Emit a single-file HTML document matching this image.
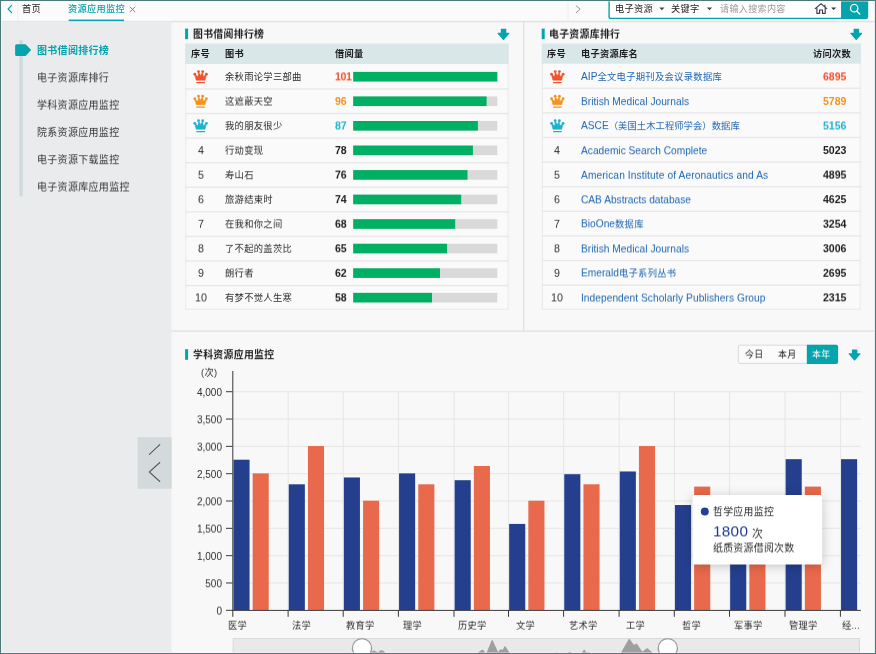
<!DOCTYPE html>
<html lang="zh-CN">
<head>
<meta charset="utf-8">
<title>资源应用监控</title>
<style>
html,body{margin:0;padding:0;width:876px;height:654px;overflow:hidden;background:#f8f8f8}
body{position:relative;font-family:"Liberation Sans","Noto Sans CJK SC",sans-serif}
.L{position:absolute;left:0;top:0;display:block}
.t{position:absolute;white-space:nowrap;line-height:16px;transform-origin:0 0;will-change:transform}
</style>
</head>
<body>
<svg class="L" width="876" height="654" viewBox="0 0 876 654"><defs><filter id="s1" x="-5%" y="-50%" width="110%" height="250%"><feGaussianBlur stdDeviation="0.7"/></filter><filter id="s2" x="-30%" y="-50%" width="160%" height="200%"><feGaussianBlur stdDeviation="5.5"/></filter></defs>
<rect x="0" y="0" width="876" height="654" fill="#f8f8f8"/>
<rect x="0" y="21" width="171.4" height="633" fill="#e9ebed"/>
<rect x="171.3" y="21.5" width="0.9" height="632" fill="#f3f3f3"/>
<linearGradient id="g3" x1="0" x2="0" y1="0" y2="1"><stop offset="0" stop-color="#000" stop-opacity="0.15"/><stop offset="0.3" stop-color="#000" stop-opacity="0.09"/><stop offset="0.6" stop-color="#000" stop-opacity="0.03"/><stop offset="1" stop-color="#000" stop-opacity="0"/></linearGradient>
<rect x="171.4" y="20.5" width="704" height="3" fill="url(#g3)"/>
<rect x="0" y="20.5" width="171.4" height="0.9" fill="rgba(0,0,0,0.05)"/>
<rect x="0" y="0" width="876" height="20.7" fill="#fbfbfb"/>
<path d="M5.6 2.4 L2.1 6.0 L5.6 9.6" fill="none" stroke="#05a4ad" stroke-width="1.2" transform="translate(6 3)" stroke-linecap="round" stroke-linejoin="round"/>
<linearGradient id="g1" x1="0" x2="1" y1="0" y2="0"><stop offset="0" stop-color="#000" stop-opacity="0.045"/><stop offset="1" stop-color="#000" stop-opacity="0"/></linearGradient>
<linearGradient id="g2" x1="0" x2="1" y1="0" y2="0"><stop offset="0" stop-color="#000" stop-opacity="0"/><stop offset="1" stop-color="#000" stop-opacity="0.04"/></linearGradient>
<rect x="17.2" y="1" width="2.4" height="20" fill="url(#g1)"/>
<rect x="565.5" y="1" width="3.2" height="20" fill="url(#g2)"/>
<rect x="68.7" y="19.55" width="55.3" height="1.55" fill="#05a4ad"/>
<path d="M2.1 2 L7.5 7.4 M7.5 2 L2.1 7.4" fill="none" stroke="#777" stroke-width="0.9" transform="translate(127.7 4.7)"/>
<path d="M3.2 2.7 L7.2 6.2 L3.2 9.7" fill="none" stroke="#8a8a8a" stroke-width="0.9" transform="translate(573 3)" stroke-linecap="round" stroke-linejoin="round"/>
<path d="M609.1 0 V16.9 Q609.1 18.4 610.6 18.4 H842 V0" fill="#fff" stroke="#05a4ad" stroke-width="1.4"/>
<path d="M841.2 0 H868.2 V17.1 Q868.2 19.1 866.2 19.1 H841.2 Z" fill="#05a4ad"/>
<path d="M0 0 H5.2 L2.6 2.8 Z" fill="#444" transform="translate(659.3 7.5)"/>
<path d="M0 0 H5.2 L2.6 2.8 Z" fill="#444" transform="translate(706.9 7.5)"/>
<path d="M0.9 5.9 L7.05 0.7 L13.2 5.9 M2.9 4.8 V10.4 H5.6 V7.0 H8.5 V10.4 H11.2 V4.8 M10.9 1.7 V3.6" fill="none" stroke="#3f3f52" stroke-width="1.15" transform="translate(814 3)"/>
<path d="M0 0 H5 L2.5 2.6 Z" fill="#333" transform="translate(831.1 7.5)"/>
<circle cx="854.2" cy="8.2" r="3.7" fill="none" stroke="#fff" stroke-width="1.25"/>
<path d="M856.9 11.2 L859.8 14.1" stroke="#fff" stroke-width="1.35" stroke-linecap="round"/>
<rect x="19.4" y="40.2" width="3.4" height="156.2" fill="#cfdadc"/>
<path d="M2.6 1.1 H11.6 L17.2 7 L11.6 12.9 H2.6 Q1.1 12.9 1.1 11.4 V2.6 Q1.1 1.1 2.6 1.1 Z" fill="#05a4ad" transform="translate(14 43.1)"/>
<rect x="137.6" y="437.2" width="34" height="51.6" fill="#d4dadb"/>
<path d="M5.4 14.4 L15.8 4.6 M15.8 22.5 L5.3 32 L15.8 41.5" fill="none" stroke="#585858" stroke-width="1.1" transform="translate(144 440)" stroke-linecap="round"/>
<rect x="171.3" y="330.3" width="702.7" height="1.7" fill="#e5e5e5"/>
<rect x="523" y="22" width="1.2" height="308.5" fill="#dfdfdf"/>
<rect x="185.1" y="28.6" width="3" height="10.6" fill="#05a4ad"/>
<path d="M4.7 0.8 H9.6 Q9.9 0.8 9.9 1.1 V4.7 H12.3 Q13.6 4.7 12.8 5.7 L7.55 11.7 Q7.05 12.25 6.55 11.7 L1.3 5.7 Q0.5 4.7 1.8 4.7 H4.4 V1.1 Q4.4 0.8 4.7 0.8 Z" fill="#05a4ad" transform="translate(496.4 28)"/>
<rect x="185.8" y="43.85" width="322.3" height="265.45" fill="#fafafa" stroke="#ebebeb" stroke-width="1.2"/>
<rect x="185.2" y="43.85" width="323.5" height="20.15" fill="#d9e7e8"/>
<rect x="185.2" y="88.3" width="323.5" height="1.4" fill="#e8e8e8"/>
<rect x="185.2" y="112.87" width="323.5" height="1.4" fill="#e8e8e8"/>
<rect x="185.2" y="137.44" width="323.5" height="1.4" fill="#e8e8e8"/>
<rect x="185.2" y="162.01" width="323.5" height="1.4" fill="#e8e8e8"/>
<rect x="185.2" y="186.58" width="323.5" height="1.4" fill="#e8e8e8"/>
<rect x="185.2" y="211.15" width="323.5" height="1.4" fill="#e8e8e8"/>
<rect x="185.2" y="235.72" width="323.5" height="1.4" fill="#e8e8e8"/>
<rect x="185.2" y="260.29" width="323.5" height="1.4" fill="#e8e8e8"/>
<rect x="185.2" y="284.86" width="323.5" height="1.4" fill="#e8e8e8"/>
<g transform="translate(192.6 69)" fill="#f4512f"><path d="M3.6 11.2 L2.1 5.4 L5.4 7.6 L5.9 2.9 L8 6.4 L10.1 2.9 L10.6 7.6 L13.9 5.4 L12.4 11.2 Z" stroke="#f4512f" stroke-width="0.5" stroke-linejoin="round"/><circle cx="2.2" cy="5.2" r="1.4"/><circle cx="5.9" cy="2.6" r="1.4"/><circle cx="10.1" cy="2.6" r="1.4"/><circle cx="13.8" cy="5.2" r="1.4"/><rect x="3.7" y="12.9" width="8.7" height="1.25" rx="0.3"/></g>
<rect x="353.2" y="71.9" width="144.1" height="9.6" fill="#d9d9d9"/>
<rect x="353.2" y="71.9" width="144.1" height="9.6" fill="#00b062"/>
<g transform="translate(192.6 93.55)" fill="#f6921e"><path d="M3.6 11.2 L2.1 5.4 L5.4 7.6 L5.9 2.9 L8 6.4 L10.1 2.9 L10.6 7.6 L13.9 5.4 L12.4 11.2 Z" stroke="#f6921e" stroke-width="0.5" stroke-linejoin="round"/><circle cx="2.2" cy="5.2" r="1.4"/><circle cx="5.9" cy="2.6" r="1.4"/><circle cx="10.1" cy="2.6" r="1.4"/><circle cx="13.8" cy="5.2" r="1.4"/><rect x="3.7" y="12.9" width="8.7" height="1.25" rx="0.3"/></g>
<rect x="353.2" y="96.45" width="144.1" height="9.6" fill="#d9d9d9"/>
<rect x="353.2" y="96.45" width="133.4" height="9.6" fill="#00b062"/>
<g transform="translate(192.6 118.1)" fill="#1bb4d0"><path d="M3.6 11.2 L2.1 5.4 L5.4 7.6 L5.9 2.9 L8 6.4 L10.1 2.9 L10.6 7.6 L13.9 5.4 L12.4 11.2 Z" stroke="#1bb4d0" stroke-width="0.5" stroke-linejoin="round"/><circle cx="2.2" cy="5.2" r="1.4"/><circle cx="5.9" cy="2.6" r="1.4"/><circle cx="10.1" cy="2.6" r="1.4"/><circle cx="13.8" cy="5.2" r="1.4"/><rect x="3.7" y="12.9" width="8.7" height="1.25" rx="0.3"/></g>
<rect x="353.2" y="121" width="144.1" height="9.6" fill="#d9d9d9"/>
<rect x="353.2" y="121" width="124.7" height="9.6" fill="#00b062"/>
<rect x="353.2" y="145.55" width="144.1" height="9.6" fill="#d9d9d9"/>
<rect x="353.2" y="145.55" width="119.7" height="9.6" fill="#00b062"/>
<rect x="353.2" y="170.1" width="144.1" height="9.6" fill="#d9d9d9"/>
<rect x="353.2" y="170.1" width="114.3" height="9.6" fill="#00b062"/>
<rect x="353.2" y="194.65" width="144.1" height="9.6" fill="#d9d9d9"/>
<rect x="353.2" y="194.65" width="108" height="9.6" fill="#00b062"/>
<rect x="353.2" y="219.2" width="144.1" height="9.6" fill="#d9d9d9"/>
<rect x="353.2" y="219.2" width="102" height="9.6" fill="#00b062"/>
<rect x="353.2" y="243.75" width="144.1" height="9.6" fill="#d9d9d9"/>
<rect x="353.2" y="243.75" width="93.9" height="9.6" fill="#00b062"/>
<rect x="353.2" y="268.3" width="144.1" height="9.6" fill="#d9d9d9"/>
<rect x="353.2" y="268.3" width="86.8" height="9.6" fill="#00b062"/>
<rect x="353.2" y="292.85" width="144.1" height="9.6" fill="#d9d9d9"/>
<rect x="353.2" y="292.85" width="78.8" height="9.6" fill="#00b062"/>
<rect x="541.7" y="28.6" width="3" height="10.6" fill="#05a4ad"/>
<path d="M4.7 0.8 H9.6 Q9.9 0.8 9.9 1.1 V4.7 H12.3 Q13.6 4.7 12.8 5.7 L7.55 11.7 Q7.05 12.25 6.55 11.7 L1.3 5.7 Q0.5 4.7 1.8 4.7 H4.4 V1.1 Q4.4 0.8 4.7 0.8 Z" fill="#05a4ad" transform="translate(849.2 28)"/>
<rect x="542.4" y="43.85" width="317.9" height="265.45" fill="#fafafa" stroke="#ebebeb" stroke-width="1.2"/>
<rect x="541.8" y="43.85" width="319.1" height="19.85" fill="#d9e7e8"/>
<rect x="541.8" y="87.6" width="319.1" height="1.4" fill="#e8e8e8"/>
<rect x="541.8" y="112.2" width="319.1" height="1.4" fill="#e8e8e8"/>
<rect x="541.8" y="136.8" width="319.1" height="1.4" fill="#e8e8e8"/>
<rect x="541.8" y="161.4" width="319.1" height="1.4" fill="#e8e8e8"/>
<rect x="541.8" y="186" width="319.1" height="1.4" fill="#e8e8e8"/>
<rect x="541.8" y="210.6" width="319.1" height="1.4" fill="#e8e8e8"/>
<rect x="541.8" y="235.2" width="319.1" height="1.4" fill="#e8e8e8"/>
<rect x="541.8" y="259.8" width="319.1" height="1.4" fill="#e8e8e8"/>
<rect x="541.8" y="284.4" width="319.1" height="1.4" fill="#e8e8e8"/>
<g transform="translate(549.3 69)" fill="#f4512f"><path d="M3.6 11.2 L2.1 5.4 L5.4 7.6 L5.9 2.9 L8 6.4 L10.1 2.9 L10.6 7.6 L13.9 5.4 L12.4 11.2 Z" stroke="#f4512f" stroke-width="0.5" stroke-linejoin="round"/><circle cx="2.2" cy="5.2" r="1.4"/><circle cx="5.9" cy="2.6" r="1.4"/><circle cx="10.1" cy="2.6" r="1.4"/><circle cx="13.8" cy="5.2" r="1.4"/><rect x="3.7" y="12.9" width="8.7" height="1.25" rx="0.3"/></g>
<g transform="translate(549.3 93.55)" fill="#f6921e"><path d="M3.6 11.2 L2.1 5.4 L5.4 7.6 L5.9 2.9 L8 6.4 L10.1 2.9 L10.6 7.6 L13.9 5.4 L12.4 11.2 Z" stroke="#f6921e" stroke-width="0.5" stroke-linejoin="round"/><circle cx="2.2" cy="5.2" r="1.4"/><circle cx="5.9" cy="2.6" r="1.4"/><circle cx="10.1" cy="2.6" r="1.4"/><circle cx="13.8" cy="5.2" r="1.4"/><rect x="3.7" y="12.9" width="8.7" height="1.25" rx="0.3"/></g>
<g transform="translate(549.3 118.1)" fill="#1bb4d0"><path d="M3.6 11.2 L2.1 5.4 L5.4 7.6 L5.9 2.9 L8 6.4 L10.1 2.9 L10.6 7.6 L13.9 5.4 L12.4 11.2 Z" stroke="#1bb4d0" stroke-width="0.5" stroke-linejoin="round"/><circle cx="2.2" cy="5.2" r="1.4"/><circle cx="5.9" cy="2.6" r="1.4"/><circle cx="10.1" cy="2.6" r="1.4"/><circle cx="13.8" cy="5.2" r="1.4"/><rect x="3.7" y="12.9" width="8.7" height="1.25" rx="0.3"/></g>
<rect x="185.1" y="349.2" width="3" height="10.6" fill="#05a4ad"/>
<rect x="738.3" y="345.2" width="99.3" height="18.2" rx="1.8" fill="#fbfbfb" stroke="#d9d9d9" stroke-width="1"/>
<path d="M806.8 344.7 H836.2 Q838.1 344.7 838.1 346.6 V362 Q838.1 363.9 836.2 363.9 H806.8 Z" fill="#05a4ad"/>
<path d="M4.7 0.8 H9.6 Q9.9 0.8 9.9 1.1 V4.7 H12.3 Q13.6 4.7 12.8 5.7 L7.55 11.7 Q7.05 12.25 6.55 11.7 L1.3 5.7 Q0.5 4.7 1.8 4.7 H4.4 V1.1 Q4.4 0.8 4.7 0.8 Z" fill="#05a4ad" transform="translate(847.5 348.6)"/>
<rect x="233.4" y="582.42" width="627.4" height="1.1" fill="#e7e7e7"/>
<rect x="233.4" y="555.1" width="627.4" height="1.1" fill="#e7e7e7"/>
<rect x="233.4" y="527.77" width="627.4" height="1.1" fill="#e7e7e7"/>
<rect x="233.4" y="500.45" width="627.4" height="1.1" fill="#e7e7e7"/>
<rect x="233.4" y="473.12" width="627.4" height="1.1" fill="#e7e7e7"/>
<rect x="233.4" y="445.8" width="627.4" height="1.1" fill="#e7e7e7"/>
<rect x="233.4" y="418.48" width="627.4" height="1.1" fill="#e7e7e7"/>
<rect x="233.4" y="391.15" width="627.4" height="1.1" fill="#e7e7e7"/>
<rect x="287.65" y="391.4" width="1.1" height="218.6" fill="#e7e7e7"/>
<rect x="342.75" y="391.4" width="1.1" height="218.6" fill="#e7e7e7"/>
<rect x="397.95" y="391.4" width="1.1" height="218.6" fill="#e7e7e7"/>
<rect x="453.55" y="391.4" width="1.1" height="218.6" fill="#e7e7e7"/>
<rect x="508.05" y="391.4" width="1.1" height="218.6" fill="#e7e7e7"/>
<rect x="563.15" y="391.4" width="1.1" height="218.6" fill="#e7e7e7"/>
<rect x="618.65" y="391.4" width="1.1" height="218.6" fill="#e7e7e7"/>
<rect x="673.85" y="391.4" width="1.1" height="218.6" fill="#e7e7e7"/>
<rect x="729.05" y="391.4" width="1.1" height="218.6" fill="#e7e7e7"/>
<rect x="784.55" y="391.4" width="1.1" height="218.6" fill="#e7e7e7"/>
<rect x="839.95" y="391.4" width="1.1" height="218.6" fill="#e7e7e7"/>
<rect x="233.45" y="459.71" width="16.1" height="150.29" fill="#243f8d"/>
<rect x="252.65" y="473.38" width="16.1" height="136.62" fill="#e8694b"/>
<rect x="288.75" y="484.31" width="16.1" height="125.7" fill="#243f8d"/>
<rect x="307.95" y="446.05" width="16.1" height="163.95" fill="#e8694b"/>
<rect x="343.85" y="477.47" width="16.1" height="132.53" fill="#243f8d"/>
<rect x="363.05" y="500.7" width="16.1" height="109.3" fill="#e8694b"/>
<rect x="399.05" y="473.38" width="16.1" height="136.62" fill="#243f8d"/>
<rect x="418.25" y="484.31" width="16.1" height="125.7" fill="#e8694b"/>
<rect x="454.65" y="480.21" width="16.1" height="129.79" fill="#243f8d"/>
<rect x="473.85" y="466" width="16.1" height="144" fill="#e8694b"/>
<rect x="509.15" y="523.93" width="16.1" height="86.07" fill="#243f8d"/>
<rect x="528.35" y="500.7" width="16.1" height="109.3" fill="#e8694b"/>
<rect x="564.25" y="474.19" width="16.1" height="135.81" fill="#243f8d"/>
<rect x="583.45" y="484.31" width="16.1" height="125.7" fill="#e8694b"/>
<rect x="619.75" y="471.46" width="16.1" height="138.54" fill="#243f8d"/>
<rect x="638.95" y="446.05" width="16.1" height="163.95" fill="#e8694b"/>
<rect x="674.95" y="505.02" width="16.1" height="104.98" fill="#243f8d"/>
<rect x="694.15" y="486.6" width="16.1" height="123.4" fill="#e8694b"/>
<rect x="730.15" y="517.1" width="16.1" height="92.91" fill="#243f8d"/>
<rect x="749.35" y="528.02" width="16.1" height="81.98" fill="#e8694b"/>
<rect x="785.65" y="459.17" width="16.1" height="150.83" fill="#243f8d"/>
<rect x="804.85" y="486.6" width="16.1" height="123.4" fill="#e8694b"/>
<rect x="841.05" y="459.17" width="16.1" height="150.83" fill="#243f8d"/>
<rect x="232.3" y="371" width="1" height="239.9" fill="#3a3a3a"/>
<rect x="232.3" y="609.9" width="628.5" height="1" fill="#3a3a3a"/>
<rect x="226" y="609.8" width="6.6" height="1" fill="#3a3a3a"/>
<rect x="226" y="582.47" width="6.6" height="1" fill="#3a3a3a"/>
<rect x="226" y="555.15" width="6.6" height="1" fill="#3a3a3a"/>
<rect x="226" y="527.82" width="6.6" height="1" fill="#3a3a3a"/>
<rect x="226" y="500.5" width="6.6" height="1" fill="#3a3a3a"/>
<rect x="226" y="473.18" width="6.6" height="1" fill="#3a3a3a"/>
<rect x="226" y="445.85" width="6.6" height="1" fill="#3a3a3a"/>
<rect x="226" y="418.53" width="6.6" height="1" fill="#3a3a3a"/>
<rect x="226" y="391.2" width="6.6" height="1" fill="#3a3a3a"/>
<rect x="232.3" y="610" width="1" height="6.8" fill="#3a3a3a"/>
<rect x="287.6" y="610" width="1" height="6.8" fill="#3a3a3a"/>
<rect x="342.7" y="610" width="1" height="6.8" fill="#3a3a3a"/>
<rect x="397.9" y="610" width="1" height="6.8" fill="#3a3a3a"/>
<rect x="453.5" y="610" width="1" height="6.8" fill="#3a3a3a"/>
<rect x="508" y="610" width="1" height="6.8" fill="#3a3a3a"/>
<rect x="563.1" y="610" width="1" height="6.8" fill="#3a3a3a"/>
<rect x="618.6" y="610" width="1" height="6.8" fill="#3a3a3a"/>
<rect x="673.8" y="610" width="1" height="6.8" fill="#3a3a3a"/>
<rect x="729" y="610" width="1" height="6.8" fill="#3a3a3a"/>
<rect x="784.5" y="610" width="1" height="6.8" fill="#3a3a3a"/>
<rect x="839.9" y="610" width="1" height="6.8" fill="#3a3a3a"/>
<rect x="233.1" y="638.5" width="626.4" height="20" fill="#e9e9e9" stroke="#d9d9d9" stroke-width="1"/>
<path d="M370.6 653.2 Q372.4 650.4 373.7 650.4 Q375.2 650.4 377.6 652.4 Q380.2 650.2 381.8 650.2 Q383.4 650.2 385.6 653.2 Z" fill="#9f9f9f"/>
<path d="M477.2 653.2 L480.2 650.9 Q482.3 649.1 483.6 650.3 L485.6 653.2 Z" fill="#9f9f9f"/>
<path d="M486.4 653.2 L491.6 640.6 Q492.2 639.3 492.8 640.6 L498.0 652.0 L500.2 649.6 Q500.8 648.9 501.6 649.6 L502.6 650.0 L504.4 646.6 Q504.9 645.7 505.5 646.6 L509.9 653.2 Z" fill="#9f9f9f"/>
<path d="M555 653.2 L557 652.5 L559 653.2 Z M566.5 653.2 L569.7 651.7 L573 653.2 Z M581.6 653.2 L583.7 649.9 Q584.2 649.0 584.7 649.9 L586.6 652.6 L589 652.3 L590.6 653.2 Z" fill="#9f9f9f"/>
<path d="M620.6 653.2 L628.5 639.4 Q629.2 638.2 629.9 639.4 L634.0 645.1 L635.9 643.8 Q636.5 643.3 637.1 644.0 L642.3 651.8 L646.6 648.6 Q647.4 648.0 648.1 648.7 L653.2 653.2 Z" fill="#9f9f9f"/>
<circle cx="362.0" cy="648.2" r="9.6" fill="#fff" stroke="#9c9c9c" stroke-width="1.3"/>
<circle cx="667.8" cy="648.2" r="9.6" fill="#fff" stroke="#9c9c9c" stroke-width="1.3"/>
</svg>
<div class="t" style="left:21.7px;top:1px;font-size:9.21px;color:#1e1e1e;transform:translate(0px,0px) rotate(0.003deg);letter-spacing:0.29px;">首页</div>
<div class="t" style="left:68px;top:1px;font-size:9.21px;color:#05a4ad;font-weight:500;transform:translate(0px,0px) rotate(0.003deg);letter-spacing:0.29px;">资源应用监控</div>
<div class="t" style="left:615px;top:1px;font-size:9.21px;color:#1e1e1e;transform:translate(0px,0px) rotate(0.003deg);letter-spacing:0.29px;">电子资源</div>
<div class="t" style="left:670.6px;top:1px;font-size:9.21px;color:#1e1e1e;transform:translate(0px,0px) rotate(0.003deg);letter-spacing:0.29px;">关键字</div>
<div class="t" style="left:719.5px;top:1px;font-size:9.12px;color:#9a9a9a;transform:translate(0px,0px) rotate(0.003deg);letter-spacing:0.28px;">请输入搜索内容</div>
<div class="t" style="left:36.8px;top:43px;font-size:10.01px;color:#05a4ad;font-weight:700;transform:translate(0px,0px) rotate(0.003deg);letter-spacing:0.31px;">图书借阅排行榜</div>
<div class="t" style="left:36.8px;top:70px;font-size:10.01px;color:#333;transform:translate(0px,0.3px) rotate(0.003deg);letter-spacing:0.31px;">电子资源库排行</div>
<div class="t" style="left:36.8px;top:97px;font-size:10.01px;color:#333;transform:translate(0px,0.6px) rotate(0.003deg);letter-spacing:0.31px;">学科资源应用监控</div>
<div class="t" style="left:36.8px;top:124px;font-size:10.01px;color:#333;transform:translate(0px,0.9px) rotate(0.003deg);letter-spacing:0.31px;">院系资源应用监控</div>
<div class="t" style="left:36.8px;top:152px;font-size:10.01px;color:#333;transform:translate(0px,0.2px) rotate(0.003deg);letter-spacing:0.31px;">电子资源下载监控</div>
<div class="t" style="left:36.8px;top:179px;font-size:10.01px;color:#333;transform:translate(0px,0.5px) rotate(0.003deg);letter-spacing:0.31px;">电子资源库应用监控</div>
<div class="t" style="left:192.7px;top:26px;font-size:9.89px;color:#1e1e1e;font-weight:700;transform:translate(0px,0.6px) rotate(0.003deg);letter-spacing:0.31px;">图书借阅排行榜</div>
<div class="t" style="left:549.3px;top:26px;font-size:9.89px;color:#1e1e1e;font-weight:700;transform:translate(0px,0.6px) rotate(0.003deg);letter-spacing:0.31px;">电子资源库排行</div>
<div class="t" style="left:192.7px;top:347px;font-size:9.89px;color:#1e1e1e;font-weight:700;transform:translate(0px,0.2px) rotate(0.003deg);letter-spacing:0.31px;">学科资源应用监控</div>
<div class="t" style="left:190.8px;top:46px;font-size:9.21px;color:#1e1e1e;font-weight:700;transform:translate(0px,0px) rotate(0.003deg);letter-spacing:0.29px;">序号</div>
<div class="t" style="left:224.6px;top:46px;font-size:9.21px;color:#1e1e1e;font-weight:700;transform:translate(0px,0px) rotate(0.003deg);letter-spacing:0.29px;">图书</div>
<div class="t" style="left:334.6px;top:46px;font-size:9.21px;color:#1e1e1e;font-weight:700;transform:translate(0px,0px) rotate(0.003deg);letter-spacing:0.29px;">借阅量</div>
<div class="t" style="left:547.2px;top:46px;font-size:9.21px;color:#1e1e1e;font-weight:700;transform:translate(0px,0px) rotate(0.003deg);letter-spacing:0.29px;">序号</div>
<div class="t" style="left:580.8px;top:46px;font-size:9.21px;color:#1e1e1e;font-weight:700;transform:translate(0px,0px) rotate(0.003deg);letter-spacing:0.29px;">电子资源库名</div>
<div class="t" style="left:812.5px;top:46px;font-size:9.21px;color:#1e1e1e;font-weight:700;transform:translate(0px,0px) rotate(0.003deg);letter-spacing:0.29px;">访问次数</div>
<div class="t" style="left:224.8px;top:69px;font-size:9.31px;color:#2b2b2b;transform:translate(0px,0px) rotate(0.003deg);letter-spacing:0.29px;">余秋雨论学三部曲</div>
<div class="t" style="left:335.2px;top:68px;font-size:10.6px;color:#f4512f;font-weight:700;transform:translate(0px,0.4px) rotate(0.003deg);letter-spacing:-0.4px;">101</div>
<div class="t" style="left:224.8px;top:93px;font-size:9.31px;color:#2b2b2b;transform:translate(0px,0.55px) rotate(0.003deg);letter-spacing:0.29px;">这遮蔽天空</div>
<div class="t" style="left:335.2px;top:92px;font-size:10.6px;color:#f6921e;font-weight:700;transform:translate(0px,0.95px) rotate(0.003deg);letter-spacing:-0.05px;">96</div>
<div class="t" style="left:224.8px;top:118px;font-size:9.31px;color:#2b2b2b;transform:translate(0px,0.1px) rotate(0.003deg);letter-spacing:0.29px;">我的朋友很少</div>
<div class="t" style="left:335.2px;top:117px;font-size:10.6px;color:#1bb4d0;font-weight:700;transform:translate(0px,0.5px) rotate(0.003deg);letter-spacing:-0.05px;">87</div>
<div class="t" style="left:170.6px;width:60px;text-align:center;top:142px;font-size:10.7px;color:#303030;transform:translate(0px,0.15px) rotate(0.003deg);">4</div>
<div class="t" style="left:224.8px;top:142px;font-size:9.31px;color:#2b2b2b;transform:translate(0px,0.65px) rotate(0.003deg);letter-spacing:0.29px;">行动变现</div>
<div class="t" style="left:335.2px;top:142px;font-size:10.6px;color:#1e1e1e;font-weight:700;transform:translate(0px,0.05px) rotate(0.003deg);letter-spacing:-0.05px;">78</div>
<div class="t" style="left:170.6px;width:60px;text-align:center;top:166px;font-size:10.7px;color:#303030;transform:translate(0px,0.7px) rotate(0.003deg);">5</div>
<div class="t" style="left:224.8px;top:167px;font-size:9.31px;color:#2b2b2b;transform:translate(0px,0.2px) rotate(0.003deg);letter-spacing:0.29px;">寿山石</div>
<div class="t" style="left:335.2px;top:166px;font-size:10.6px;color:#1e1e1e;font-weight:700;transform:translate(0px,0.6px) rotate(0.003deg);letter-spacing:-0.05px;">76</div>
<div class="t" style="left:170.6px;width:60px;text-align:center;top:191px;font-size:10.7px;color:#303030;transform:translate(0px,0.25px) rotate(0.003deg);">6</div>
<div class="t" style="left:224.8px;top:191px;font-size:9.31px;color:#2b2b2b;transform:translate(0px,0.75px) rotate(0.003deg);letter-spacing:0.29px;">旅游结束时</div>
<div class="t" style="left:335.2px;top:191px;font-size:10.6px;color:#1e1e1e;font-weight:700;transform:translate(0px,0.15px) rotate(0.003deg);letter-spacing:-0.05px;">74</div>
<div class="t" style="left:170.6px;width:60px;text-align:center;top:215px;font-size:10.7px;color:#303030;transform:translate(0px,0.8px) rotate(0.003deg);">7</div>
<div class="t" style="left:224.8px;top:216px;font-size:9.31px;color:#2b2b2b;transform:translate(0px,0.3px) rotate(0.003deg);letter-spacing:0.29px;">在我和你之间</div>
<div class="t" style="left:335.2px;top:215px;font-size:10.6px;color:#1e1e1e;font-weight:700;transform:translate(0px,0.7px) rotate(0.003deg);letter-spacing:-0.05px;">68</div>
<div class="t" style="left:170.6px;width:60px;text-align:center;top:240px;font-size:10.7px;color:#303030;transform:translate(0px,0.35px) rotate(0.003deg);">8</div>
<div class="t" style="left:224.8px;top:240px;font-size:9.31px;color:#2b2b2b;transform:translate(0px,0.85px) rotate(0.003deg);letter-spacing:0.29px;">了不起的盖茨比</div>
<div class="t" style="left:335.2px;top:240px;font-size:10.6px;color:#1e1e1e;font-weight:700;transform:translate(0px,0.25px) rotate(0.003deg);letter-spacing:-0.05px;">65</div>
<div class="t" style="left:170.6px;width:60px;text-align:center;top:264px;font-size:10.7px;color:#303030;transform:translate(0px,0.9px) rotate(0.003deg);">9</div>
<div class="t" style="left:224.8px;top:265px;font-size:9.31px;color:#2b2b2b;transform:translate(0px,0.4px) rotate(0.003deg);letter-spacing:0.29px;">朗行者</div>
<div class="t" style="left:335.2px;top:264px;font-size:10.6px;color:#1e1e1e;font-weight:700;transform:translate(0px,0.8px) rotate(0.003deg);letter-spacing:-0.05px;">62</div>
<div class="t" style="left:170.6px;width:60px;text-align:center;top:289px;font-size:10.7px;color:#303030;transform:translate(0px,0.45px) rotate(0.003deg);">10</div>
<div class="t" style="left:224.8px;top:289px;font-size:9.31px;color:#2b2b2b;transform:translate(0px,0.95px) rotate(0.003deg);letter-spacing:0.29px;">有梦不觉人生寒</div>
<div class="t" style="left:335.2px;top:289px;font-size:10.6px;color:#1e1e1e;font-weight:700;transform:translate(0px,0.35px) rotate(0.003deg);letter-spacing:-0.05px;">58</div>
<div class="t" style="left:581.4px;top:69px;font-size:9.31px;color:#1f66b3;transform:translate(0px,0px) rotate(0.003deg);letter-spacing:0.29px;"><span style="font-size:10.2px;letter-spacing:0px;">AIP</span>全文电子期刊及会议录数据库</div>
<div class="t" style="left:823.2px;top:68px;font-size:10.6px;color:#f4512f;font-weight:700;transform:translate(0px,0.4px) rotate(0.003deg);letter-spacing:-0.05px;">6895</div>
<div class="t" style="left:581.4px;top:94px;font-size:9.31px;color:#1f66b3;transform:translate(0px,0.15px) rotate(0.003deg);letter-spacing:0.29px;"><span style="font-size:10.2px;letter-spacing:0.02px;">British Medical Journals</span></div>
<div class="t" style="left:823.2px;top:92px;font-size:10.6px;color:#f6921e;font-weight:700;transform:translate(0px,0.95px) rotate(0.003deg);letter-spacing:-0.05px;">5789</div>
<div class="t" style="left:581.4px;top:118px;font-size:9.31px;color:#1f66b3;transform:translate(0px,0.1px) rotate(0.003deg);letter-spacing:0.06px;"><span style="font-size:10.2px;letter-spacing:0px;">ASCE</span>（美国土木工程师学会）数据库</div>
<div class="t" style="left:823.2px;top:117px;font-size:10.6px;color:#1bb4d0;font-weight:700;transform:translate(0px,0.5px) rotate(0.003deg);letter-spacing:-0.05px;">5156</div>
<div class="t" style="left:527px;width:60px;text-align:center;top:142px;font-size:10.7px;color:#303030;transform:translate(0px,0.15px) rotate(0.003deg);">4</div>
<div class="t" style="left:581.4px;top:143px;font-size:9.31px;color:#1f66b3;transform:translate(0px,0.25px) rotate(0.003deg);letter-spacing:0.29px;"><span style="font-size:10.2px;letter-spacing:0px;">Academic Search Complete</span></div>
<div class="t" style="left:823.2px;top:142px;font-size:10.6px;color:#1e1e1e;font-weight:700;transform:translate(0px,0.05px) rotate(0.003deg);letter-spacing:-0.05px;">5023</div>
<div class="t" style="left:527px;width:60px;text-align:center;top:166px;font-size:10.7px;color:#303030;transform:translate(0px,0.7px) rotate(0.003deg);">5</div>
<div class="t" style="left:581.4px;top:167px;font-size:9.31px;color:#1f66b3;transform:translate(0px,0.8px) rotate(0.003deg);letter-spacing:0.29px;"><span style="font-size:10.2px;letter-spacing:0.11px;">American Institute of Aeronautics and As</span></div>
<div class="t" style="left:823.2px;top:166px;font-size:10.6px;color:#1e1e1e;font-weight:700;transform:translate(0px,0.6px) rotate(0.003deg);letter-spacing:-0.05px;">4895</div>
<div class="t" style="left:527px;width:60px;text-align:center;top:191px;font-size:10.7px;color:#303030;transform:translate(0px,0.25px) rotate(0.003deg);">6</div>
<div class="t" style="left:581.4px;top:192px;font-size:9.31px;color:#1f66b3;transform:translate(0px,0.35px) rotate(0.003deg);letter-spacing:0.29px;"><span style="font-size:10.2px;letter-spacing:-0.02px;">CAB Abstracts database</span></div>
<div class="t" style="left:823.2px;top:191px;font-size:10.6px;color:#1e1e1e;font-weight:700;transform:translate(0px,0.15px) rotate(0.003deg);letter-spacing:-0.05px;">4625</div>
<div class="t" style="left:527px;width:60px;text-align:center;top:215px;font-size:10.7px;color:#303030;transform:translate(0px,0.8px) rotate(0.003deg);">7</div>
<div class="t" style="left:581.4px;top:216px;font-size:9.31px;color:#1f66b3;transform:translate(0px,0.3px) rotate(0.003deg);letter-spacing:0.29px;"><span style="font-size:10.2px;letter-spacing:0px;">BioOne</span>数据库</div>
<div class="t" style="left:823.2px;top:215px;font-size:10.6px;color:#1e1e1e;font-weight:700;transform:translate(0px,0.7px) rotate(0.003deg);letter-spacing:-0.05px;">3254</div>
<div class="t" style="left:527px;width:60px;text-align:center;top:240px;font-size:10.7px;color:#303030;transform:translate(0px,0.35px) rotate(0.003deg);">8</div>
<div class="t" style="left:581.4px;top:241px;font-size:9.31px;color:#1f66b3;transform:translate(0px,0.45px) rotate(0.003deg);letter-spacing:0.29px;"><span style="font-size:10.2px;letter-spacing:0.02px;">British Medical Journals</span></div>
<div class="t" style="left:823.2px;top:240px;font-size:10.6px;color:#1e1e1e;font-weight:700;transform:translate(0px,0.25px) rotate(0.003deg);letter-spacing:-0.05px;">3006</div>
<div class="t" style="left:527px;width:60px;text-align:center;top:264px;font-size:10.7px;color:#303030;transform:translate(0px,0.9px) rotate(0.003deg);">9</div>
<div class="t" style="left:581.4px;top:265px;font-size:9.31px;color:#1f66b3;transform:translate(0px,0.4px) rotate(0.003deg);letter-spacing:0.29px;"><span style="font-size:10.2px;letter-spacing:0px;">Emerald</span>电子系列丛书</div>
<div class="t" style="left:823.2px;top:264px;font-size:10.6px;color:#1e1e1e;font-weight:700;transform:translate(0px,0.8px) rotate(0.003deg);letter-spacing:-0.05px;">2695</div>
<div class="t" style="left:527px;width:60px;text-align:center;top:289px;font-size:10.7px;color:#303030;transform:translate(0px,0.45px) rotate(0.003deg);">10</div>
<div class="t" style="left:581.4px;top:290px;font-size:9.31px;color:#1f66b3;transform:translate(0px,0.55px) rotate(0.003deg);letter-spacing:0.29px;"><span style="font-size:10.2px;letter-spacing:0.04px;">Independent Scholarly Publishers Group</span></div>
<div class="t" style="left:823.2px;top:289px;font-size:10.6px;color:#1e1e1e;font-weight:700;transform:translate(0px,0.35px) rotate(0.003deg);letter-spacing:-0.05px;">2315</div>
<div class="t" style="left:745px;top:346px;font-size:8.92px;color:#1e1e1e;transform:translate(0px,0.6px) rotate(0.003deg);letter-spacing:0.28px;">今日</div>
<div class="t" style="left:778px;top:346px;font-size:8.92px;color:#1e1e1e;transform:translate(0px,0.6px) rotate(0.003deg);letter-spacing:0.28px;">本月</div>
<div class="t" style="left:811.8px;top:346px;font-size:8.92px;color:#fff;transform:translate(0px,0.6px) rotate(0.003deg);letter-spacing:0.28px;">本年</div>
<div class="t" style="left:201px;top:364px;font-size:9.31px;color:#2b2b2b;transform:translate(0px,0.8px) rotate(0.003deg);letter-spacing:0.29px;">(次)</div>
<div class="t" style="left:161.6px;width:60px;text-align:right;top:603px;font-size:10.0px;color:#303030;transform:translate(0px,0.6px) rotate(0.003deg);letter-spacing:0.0px;">0</div>
<div class="t" style="left:161.6px;width:60px;text-align:right;top:576px;font-size:10.0px;color:#303030;transform:translate(0px,0.27px) rotate(0.003deg);letter-spacing:0.0px;">500</div>
<div class="t" style="left:161.6px;width:60px;text-align:right;top:548px;font-size:10.0px;color:#303030;transform:translate(0px,0.95px) rotate(0.003deg);letter-spacing:0.0px;">1,000</div>
<div class="t" style="left:161.6px;width:60px;text-align:right;top:521px;font-size:10.0px;color:#303030;transform:translate(0px,0.62px) rotate(0.003deg);letter-spacing:0.0px;">1,500</div>
<div class="t" style="left:161.6px;width:60px;text-align:right;top:494px;font-size:10.0px;color:#303030;transform:translate(0px,0.3px) rotate(0.003deg);letter-spacing:0.0px;">2,000</div>
<div class="t" style="left:161.6px;width:60px;text-align:right;top:466px;font-size:10.0px;color:#303030;transform:translate(0px,0.98px) rotate(0.003deg);letter-spacing:0.0px;">2,500</div>
<div class="t" style="left:161.6px;width:60px;text-align:right;top:439px;font-size:10.0px;color:#303030;transform:translate(0px,0.65px) rotate(0.003deg);letter-spacing:0.0px;">3,000</div>
<div class="t" style="left:161.6px;width:60px;text-align:right;top:412px;font-size:10.0px;color:#303030;transform:translate(0px,0.33px) rotate(0.003deg);letter-spacing:0.0px;">3,500</div>
<div class="t" style="left:161.6px;width:60px;text-align:right;top:385px;font-size:10.0px;color:#303030;transform:translate(0px,0px) rotate(0.003deg);letter-spacing:0.0px;">4,000</div>
<div class="t" style="left:228.3px;top:617px;font-size:9.21px;color:#2b2b2b;transform:translate(0px,0.7px) rotate(0.003deg);letter-spacing:0.29px;">医学</div>
<div class="t" style="left:292.4px;top:617px;font-size:9.21px;color:#2b2b2b;transform:translate(0px,0.7px) rotate(0.003deg);letter-spacing:0.29px;">法学</div>
<div class="t" style="left:345.5px;top:617px;font-size:9.21px;color:#2b2b2b;transform:translate(0px,0.7px) rotate(0.003deg);letter-spacing:0.29px;">教育学</div>
<div class="t" style="left:402.7px;top:617px;font-size:9.21px;color:#2b2b2b;transform:translate(0px,0.7px) rotate(0.003deg);letter-spacing:0.29px;">理学</div>
<div class="t" style="left:457.9px;top:617px;font-size:9.21px;color:#2b2b2b;transform:translate(0px,0.7px) rotate(0.003deg);letter-spacing:0.29px;">历史学</div>
<div class="t" style="left:515.5px;top:617px;font-size:9.21px;color:#2b2b2b;transform:translate(0px,0.7px) rotate(0.003deg);letter-spacing:0.29px;">文学</div>
<div class="t" style="left:568.5px;top:617px;font-size:9.21px;color:#2b2b2b;transform:translate(0px,0.7px) rotate(0.003deg);letter-spacing:0.29px;">艺术学</div>
<div class="t" style="left:625.6px;top:617px;font-size:9.21px;color:#2b2b2b;transform:translate(0px,0.7px) rotate(0.003deg);letter-spacing:0.29px;">工学</div>
<div class="t" style="left:681.6px;top:617px;font-size:9.21px;color:#2b2b2b;transform:translate(0px,0.7px) rotate(0.003deg);letter-spacing:0.29px;">哲学</div>
<div class="t" style="left:734.2px;top:617px;font-size:9.21px;color:#2b2b2b;transform:translate(0px,0.7px) rotate(0.003deg);letter-spacing:0.29px;">军事学</div>
<div class="t" style="left:788.6px;top:617px;font-size:9.21px;color:#2b2b2b;transform:translate(0px,0.7px) rotate(0.003deg);letter-spacing:0.29px;">管理学</div>
<div class="t" style="left:842.2px;top:617px;font-size:9.21px;color:#2b2b2b;transform:translate(0px,0.7px) rotate(0.003deg);letter-spacing:0.29px;">经...</div>
<svg class="L" width="876" height="654" viewBox="0 0 876 654">
<rect x="692.6" y="497.0" width="129.6" height="69.0" rx="2" fill="rgba(0,0,0,0.21)" filter="url(#s2)"/>
<rect x="692.6" y="495.0" width="129.6" height="69.5" rx="2.6" fill="#fff"/>
<circle cx="704.8" cy="511.6" r="4" fill="#243f8d"/>
<rect x="1.25" y="1.25" width="873.5" height="651.5" fill="none" stroke="rgba(255,255,255,0.7)" stroke-width="0.5"/>
<rect x="0.5" y="0.5" width="875" height="653" fill="none" stroke="#4b7b79" stroke-width="1"/>
<rect x="874.9" y="0" width="1.1" height="654" fill="#4b7b79"/>
</svg>
<div class="t" style="left:713.4px;top:504px;font-size:9.89px;color:#2b2b2b;transform:translate(0px,0.2px) rotate(0.003deg);letter-spacing:0.31px;">哲学应用监控</div>
<div class="t" style="left:713.2px;top:521px;font-size:15.3px;line-height:20px;color:#1c3789;transform:translate(0px,0.4px) rotate(0.003deg);letter-spacing:0.3px;">1800</div>
<div class="t" style="left:752px;top:525px;font-size:10.86px;color:#2b2b2b;transform:translate(0px,0.7px) rotate(0.003deg);letter-spacing:0.34px;">次</div>
<div class="t" style="left:713px;top:540px;font-size:9.89px;color:#2b2b2b;transform:translate(0px,0.5px) rotate(0.003deg);letter-spacing:0.31px;">纸质资源借阅次数</div>
</body>
</html>
